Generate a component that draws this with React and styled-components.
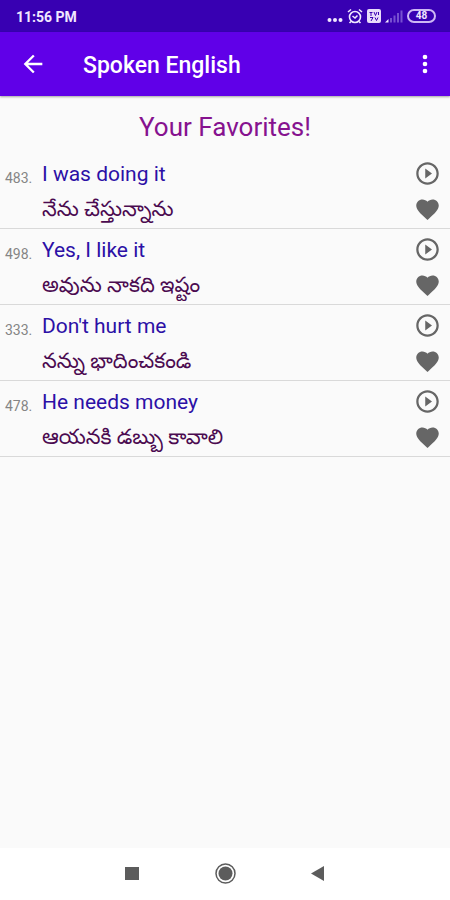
import React from "react";
import styled, { createGlobalStyle } from "styled-components";

const GlobalStyle = createGlobalStyle`
  * { box-sizing: border-box; }
  body {
    margin: 0;
    background: #fafafa;
    font-family: Roboto, "Noto Sans", "Noto Sans Telugu", sans-serif;
  }
  button { padding: 0; border: 0; background: none; color: inherit; font: inherit; cursor: pointer; }
`;

const Screen = styled.div`
  display: flex;
  flex-direction: column;
  min-height: 100vh;
  background: #fafafa;
`;

const StatusBar = styled.div`
  display: flex;
  align-items: center;
  justify-content: space-between;
  height: 32px;
  padding: 0 14px 0 16px;
  background: #3800b2;
  color: #f1e8ff;
`;

const Clock = styled.time`
  padding-top: 1px;
  font-size: 14px;
  font-weight: 700;
  line-height: 16px;
`;

const StatusIcons = styled.div`
  display: flex;
  align-items: center;
  gap: 4px;
  svg { display: block; }
`;

const Battery = styled.span`
  width: 29px;
  height: 14px;
  border: 2px solid #cdb8f4;
  border-radius: 7px;
  font-size: 10px;
  font-weight: 700;
  line-height: 10px;
  text-align: center;
`;

const AppBar = styled.header`
  display: flex;
  align-items: center;
  height: 64px;
  padding: 0 11px 0 19px;
  background: #6000e8;
  box-shadow: 0 1px 2px rgba(0, 0, 0, 0.35);
  color: #fff;
`;

const Title = styled.h1`
  flex: 1;
  margin: 0 0 0 36px;
  padding-top: 3px;
  font-size: 23px;
  font-weight: 500;
  line-height: 28px;
`;

const IconButton = styled.button`
  display: block;
  width: ${({ $size = 28 }) => $size}px;
  height: ${({ $size = 28 }) => $size}px;
  svg { display: block; width: 100%; height: 100%; fill: currentColor; }
`;

const Main = styled.main`
  flex: 1;
`;

const Heading = styled.h2`
  margin: 0;
  padding: 15px 0 10px;
  color: #86128f;
  font-size: 26px;
  font-weight: 400;
  line-height: 32px;
  text-align: center;
`;

const PhraseList = styled.ul`
  margin: 0;
  padding: 0;
  list-style: none;
`;

const PhraseRow = styled.li`
  display: grid;
  grid-template-columns: 37px 1fr 27px;
  height: 76px;
  padding: 7px 9px 0 5px;
  border-bottom: 1px solid #d9d9d9;
`;

const Number = styled.span`
  padding-top: 10px;
  color: #858585;
  font-size: 14px;
  line-height: 16px;
`;

const English = styled.p`
  margin: 0;
  color: #2c10a6;
  font-size: 21px;
  line-height: 28px;
`;

const Telugu = styled.p`
  margin: 7px 0 0;
  color: #4b0a50;
  font-size: 21px;
  line-height: 28px;
  white-space: nowrap;
`;

const Actions = styled.div`
  display: flex;
  flex-direction: column;
  gap: 9px;
  color: #666;
`;

const NavBar = styled.nav`
  display: grid;
  grid-template-columns: repeat(3, 1fr);
  justify-items: center;
  align-items: center;
  height: 52px;
  padding: 0 19%;
  background: #fff;
  color: #5c5c5c;
`;

const phrases = [
  { id: 483, english: "I was doing it", telugu: "నేను చేస్తున్నాను" },
  { id: 498, english: "Yes, I like it", telugu: "అవును నాకది ఇష్టం" },
  { id: 333, english: "Don't hurt me", telugu: "నన్ను భాదించకండి" },
  { id: 478, english: "He needs money", telugu: "ఆయనకి డబ్బు కావాలి" },
];

function Glyph({ d }) {
  return (
    <svg viewBox="0 0 24 24" aria-hidden="true">
      <path d={d} />
    </svg>
  );
}

const BACK = "M20 11H7.83l5.59-5.59L12 4l-8 8 8 8 1.41-1.41L7.83 13H20v-2z";
const MORE =
  "M12 8a2 2 0 1 0 0-4 2 2 0 0 0 0 4zm0 2a2 2 0 1 0 0 4 2 2 0 0 0 0-4zm0 6a2 2 0 1 0 0 4 2 2 0 0 0 0-4z";
const PLAY =
  "M10 16.5l6-4.5-6-4.5v9zM12 2C6.48 2 2 6.48 2 12s4.48 10 10 10 10-4.48 10-10S17.52 2 12 2zm0 18c-4.41 0-8-3.59-8-8s3.59-8 8-8 8 3.59 8 8-3.59 8-8 8z";
const HEART =
  "M12 21.35l-1.45-1.32C5.4 15.36 2 12.28 2 8.5 2 5.42 4.42 3 7.5 3c1.74 0 3.41.81 4.5 2.09C13.09 3.81 14.76 3 16.5 3 19.58 3 22 5.42 22 8.5c0 3.78-3.4 6.86-8.55 11.54L12 21.35z";

function Status() {
  return (
    <StatusBar>
      <Clock>11:56 PM</Clock>
      <StatusIcons>
        <svg width="16" height="16" viewBox="0 0 16 16" fill="currentColor">
          <circle cx="2.5" cy="12" r="2" />
          <circle cx="8" cy="12" r="2" />
          <circle cx="13.5" cy="12" r="2" />
        </svg>
        <svg width="16" height="16" viewBox="0 0 16 16" fill="none" stroke="currentColor" strokeWidth="1.6">
          <circle cx="8" cy="9" r="5.5" />
          <path d="M1 4l3-2.5M15 4l-3-2.5M5.5 8L8 10l2.5-2.5M4 13.5l-1.5 1.5M12 13.5l1.5 1.5" />
        </svg>
        <svg width="14" height="14" viewBox="0 0 14 14">
          <rect width="14" height="14" rx="2" fill="#e8dcfa" />
          <path d="M2.5 3.5h3M4 3.5V7M7 3l1.5 3.5L10 3M3 8.5h3L4 12M8 8.5l1.5 3 1.5-3M11.5 3v3" fill="none" stroke="#3800b2" strokeWidth="1" />
        </svg>
        <svg width="18" height="14" viewBox="0 0 18 14">
          <path d="M0 13.5L3.5 10v3.5z" fill="#f1e8ff" />
          <path d="M5 9h2v4.5H5zM8.5 6.5h2v7h-2zM12 4h2v9.5h-2zM15.5 1.5h2v12h-2z" fill="#7750d0" />
        </svg>
        <Battery>48</Battery>
      </StatusIcons>
    </StatusBar>
  );
}

function Phrase({ id, english, telugu }) {
  return (
    <PhraseRow>
      <Number>{id}.</Number>
      <div>
        <English>{english}</English>
        <Telugu lang="te">{telugu}</Telugu>
      </div>
      <Actions>
        <IconButton $size={27} aria-label={`Play ${english}`}>
          <Glyph d={PLAY} />
        </IconButton>
        <IconButton $size={27} aria-label={`Favorite ${english}`}>
          <Glyph d={HEART} />
        </IconButton>
      </Actions>
    </PhraseRow>
  );
}

export default function App() {
  return (
    <Screen>
      <GlobalStyle />
      <Status />
      <AppBar>
        <IconButton aria-label="Back">
          <Glyph d={BACK} />
        </IconButton>
        <Title>Spoken English</Title>
        <IconButton aria-label="More options">
          <Glyph d={MORE} />
        </IconButton>
      </AppBar>
      <Main>
        <Heading>Your Favorites!</Heading>
        <PhraseList>
          {phrases.map((phrase) => (
            <Phrase key={phrase.id} {...phrase} />
          ))}
        </PhraseList>
      </Main>
      <NavBar>
        <IconButton aria-label="Recent apps">
          <svg viewBox="0 0 28 28">
            <rect x="7" y="7" width="14" height="13" />
          </svg>
        </IconButton>
        <IconButton aria-label="Home">
          <svg viewBox="0 0 28 28">
            <circle cx="14.5" cy="13.5" r="9.5" fill="none" stroke="currentColor" strokeWidth="1.5" />
            <circle cx="14.5" cy="13.5" r="7" />
          </svg>
        </IconButton>
        <IconButton aria-label="Go back">
          <svg viewBox="0 0 28 28">
            <path d="M7 13.5L20 6v15z" />
          </svg>
        </IconButton>
      </NavBar>
    </Screen>
  );
}
